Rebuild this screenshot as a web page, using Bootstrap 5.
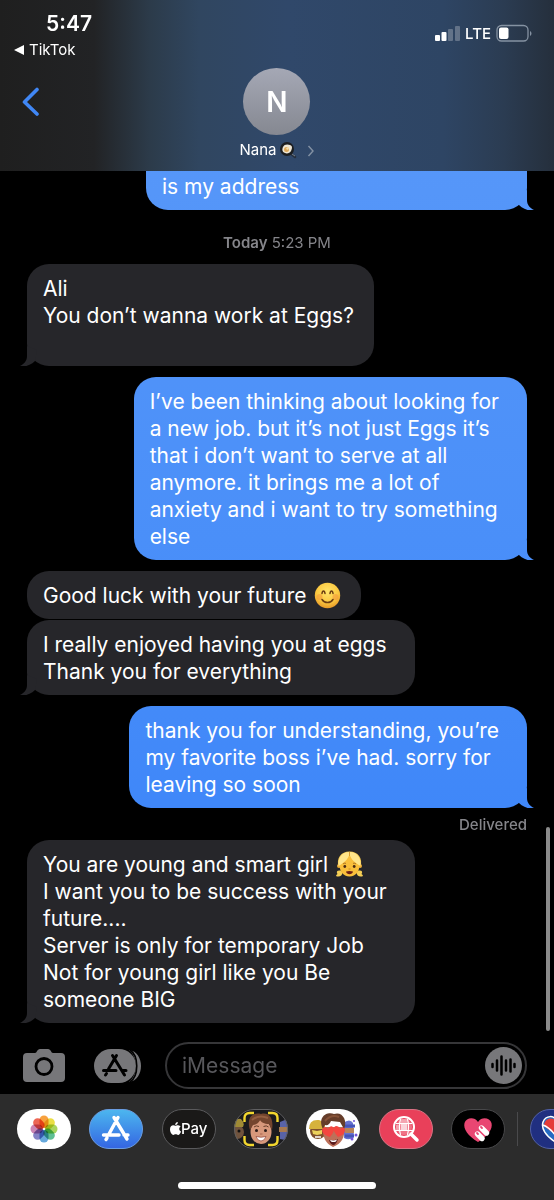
<!DOCTYPE html>
<html lang="en" data-bs-theme="dark">
<head>
<meta charset="utf-8">
<meta name="viewport" content="width=device-width, initial-scale=1">
<title>Messages – Nana</title>
<link href="https://cdn.jsdelivr.net/npm/bootstrap@5.3.0/dist/css/bootstrap.min.css" rel="stylesheet">
<style>
  body { background: #000; color: #fff; font-family: Inter, "Liberation Sans", sans-serif; overflow-x: hidden; }
  button { background: none; border: 0; padding: 0; color: inherit; flex-shrink: 0; }
  svg { display: block; }

  .chat-head { background: linear-gradient(90deg, #1f1f1f 0, #222325 17%, #2c3b4a 27%, #304660 36%, #30486a 52%, #2e4564 80%, #2b3c52 91%, #252f3c 100%); padding-bottom: 11px; }
  .status-bar { padding: 8px 22px 0 14px; height: 60px; }
  .clock { font-size: 21px; line-height: 32px; font-weight: 600; padding-left: 32px; }
  .back-app { font-size: 15px; line-height: 20px; color: #fff; gap: 5px; }
  .carrier { padding-top: 16px; gap: 5px; font-size: 15px; line-height: 20px; font-weight: 500; }
  .title-bar { padding: 8px 22px 0; }
  .title-side { width: 40px; }
  .avatar { width: 67px; height: 67px; border-radius: 50%; background: linear-gradient(#a5a8b5, #858891); font-size: 28px; font-weight: 600; }
  .contact { font-size: 15px; line-height: 20px; margin-top: 5px; gap: 2px; }

  .thread { padding: 0 27px 19px; }
  .bubble { position: relative; width: fit-content; font-size: 21px; line-height: 27px; padding: 11px 20px 10px 16px; border-radius: 22px; white-space: nowrap; background: #26262a; }
  .roomy { padding-right: 28px; }
  .sent { margin-left: auto; background: linear-gradient(#5a99fa 0, #5596f9 16%, #4a8ff9 45%, #3f87f9 68%, #3a84f9 100%) fixed; }
  .tail::after { content: ""; position: absolute; bottom: 0; width: 18px; height: 20px; background: inherit; clip-path: path("M0 4L10 0V10C10 15 13 18 17 20C11 21 6 19 2 15Z"); }
  .sent.tail::after { right: -8px; }
  .received.tail::after { left: -8px; transform: scaleX(-1); }
  .cut-top { width: 381px; max-width: 100%; border-radius: 0 0 22px 22px; padding-top: 2px; }
  .stamp { color: #85858a; font-size: 15px; line-height: 18px; margin: 24px 0 12px; }
  .delivered { color: #85858a; font-size: 15px; line-height: 18px; font-weight: 500; margin: 8px 0 6px; }
  .mb-turn { margin-bottom: 11px; }
  .mb-run { margin-bottom: 1px; }
  .emo { display: inline-block; width: 27px; height: 27px; margin-left: 2px; vertical-align: -6px; }
  .scroll-thumb { position: absolute; right: 4px; bottom: 63px; width: 4px; height: 204px; border-radius: 2px; background: #8b8b8b; }

  .compose { padding: 0 27px 5px 23px; }
  .compose-tools { gap: 29px; }
  .msg-box { border: 2px solid #363638; border-radius: 24px; height: 47px; min-width: 0; padding: 0 3px 0 15px; margin-left: 24px; }
  .msg-box input { background: transparent; border: 0; outline: 0; color: #fff; font-size: 21px; width: 100%; min-width: 0; padding: 0; }
  .msg-box input::placeholder { color: #57575b; opacity: 1; }

  .drawer { background: #2c2c2c; padding: 15px 0 11px; }
  .app-row { padding-left: 17px; overflow: hidden; }
  .app-rule { width: 1px; height: 34px; background: #4a4a4c; margin: 0 12px; }
  .peek { width: 24px; overflow: hidden; }
  .pay { width: 54px; height: 40px; border-radius: 20px; border: 1px solid #5a5a5c; background: #1a1918; font-size: 15px; font-weight: 500; }
  .petals rect { mix-blend-mode: multiply; }
  .home-bar { width: 198px; height: 7px; border-radius: 4px; background: #fff; margin: 33px auto 0; }
</style>
</head>
<body class="d-flex flex-column min-vh-100">

<header class="chat-head">
  <div class="status-bar d-flex justify-content-between">
    <div>
      <div class="clock">5:47</div>
      <a href="#" class="back-app d-flex align-items-center text-decoration-none">
        <svg width="10" height="10" viewBox="0 0 10 10"><path d="M10 0v10L0 5z" fill="#fff"/></svg><span>TikTok</span>
      </a>
    </div>
    <div class="carrier d-flex">
      <svg width="25" height="20" viewBox="0 0 25 20"><g fill="#fff"><rect y="11" width="5" height="6" rx="1"/><rect x="6.500" y="8" width="5" height="9" rx="1"/><g opacity=".25"><rect x="13" y="5" width="5" height="12" rx="1"/><rect x="20" y="2" width="5" height="15" rx="1"/></g></g></svg>
      <span>LTE</span>
      <svg width="36" height="20" viewBox="0 0 36 20"><rect x="1" y="1.500" width="31" height="15.500" rx="4.500" fill="none" stroke="#8592a2" stroke-width="1.300"/><path d="M34 7c2 1 2 4 0 5z" fill="#8592a2"/><rect x="3" y="3.500" width="9.500" height="11.500" rx="2" fill="#fff"/></svg>
    </div>
  </div>
  <div class="title-bar d-flex justify-content-between align-items-start">
    <button type="button" class="title-side" aria-label="Back"><svg width="20" height="67" viewBox="0 0 20 67"><path d="M15 21.500L2.500 34 15 46" fill="none" stroke="#4087f5" stroke-width="3.600" stroke-linecap="round" stroke-linejoin="round"/></svg></button>
    <button type="button" class="d-flex flex-column align-items-center">
      <span class="avatar d-flex align-items-center justify-content-center">N</span>
      <span class="contact d-flex align-items-center">Nana
        <svg width="18" height="18" viewBox="0 0 18 18" role="img" aria-label="egg in a pan"><path d="M11 12l5 4" stroke="#26313f" stroke-width="2.500" stroke-linecap="round"/><path d="M13 13l3 2" stroke="#777f8a"/><circle cx="8" cy="8" r="7" fill="#1c1e20"/><path d="M4 6c1-3 5-3 7-2 3 1 2 4 1 6s-4 3-6 2c-3-1-3-4-2-6z" fill="#eee6d4"/><circle cx="7.500" cy="8.500" r="2.500" fill="#dda85a"/><circle cx="8.500" cy="7.500" r="1.200" fill="#f7e0a8"/></svg>
        <svg width="8" height="14" viewBox="0 0 8 14" class="ms-2"><path d="M1.500 3L6 8l-4.500 5" fill="none" stroke="#8492a4" stroke-width="1.400"/></svg>
      </span>
    </button>
    <span class="title-side"></span>
  </div>
</header>

<main class="flex-grow-1 position-relative">
  <div class="thread">
    <div class="bubble sent tail cut-top">is my address</div>
    <div class="stamp text-center"><span class="fw-semibold">Today</span> 5:23 PM</div>
    <div class="bubble received tail mb-turn">Ali<br>You don’t wanna work at Eggs?<br>&nbsp;</div>
    <div class="bubble sent tail roomy mb-turn">I’ve been thinking about looking for<br>a new job. but it’s not just Eggs it’s<br>that i don’t want to serve at all<br>anymore. it brings me a lot of<br>anxiety and i want to try something<br>else</div>
    <div class="bubble received mb-run">Good luck with your future
      <svg class="emo" viewBox="0 0 27 27" role="img" aria-label="smiling face"><defs><radialGradient id="face" cx=".5" cy=".35" r=".65"><stop offset="0" stop-color="#ffe46a"/><stop offset=".65" stop-color="#fbc840"/><stop offset="1" stop-color="#e79a28"/></radialGradient></defs><circle cx="13.500" cy="13.500" r="12.700" fill="url(#face)"/><g fill="#f28b3c" opacity=".45"><circle cx="5.500" cy="15" r="3"/><circle cx="21.500" cy="15" r="3"/></g><g fill="none" stroke="#6b3d12" stroke-width="1.500" stroke-linecap="round"><path d="M8 11.500c.5-3.500 2.500-3.500 3 0M16 11.500c.5-3.500 2.500-3.500 3 0M8 17.500c2.500 4 8.500 4 11 0"/></g></svg></div>
    <div class="bubble received tail roomy mb-turn">I really enjoyed having you at eggs<br>Thank you for everything</div>
    <div class="bubble sent tail roomy">thank you for understanding, you’re<br>my favorite boss i’ve had. sorry for<br>leaving so soon</div>
    <div class="delivered text-end">Delivered</div>
    <div class="bubble received tail roomy">You are young and smart girl
      <svg class="emo" viewBox="0 0 27 27" role="img" aria-label="girl"><path d="M2.500 16C0 7 5 .5 13.500.5S27 7 24.500 16z" fill="#f3c84e"/><path d="M4.500 19.500C1 19 0 21 1.500 23c-1 .5-1 1-1.500 2 3 1.500 6.500 0 6.500-4zM22.500 19.500c3.500-.5 4.500 1.500 3 3.500 1 .5 1 1 1.500 2-3 1.500-6.500 0-6.500-4z" fill="#f6cf55"/><circle cx="3" cy="15" r="2" fill="#eeaf36"/><circle cx="24" cy="15" r="2" fill="#eeaf36"/><path d="M3.500 12h20c.5 8-3.500 13.500-10 13.500S3 20 3.500 12z" fill="#f9bf3b"/><path d="M5 12l8.500-8L22 12z" fill="#f9bf3b"/><path d="M2.500 15C1.500 7 6 1 13.500 1c.5 5-4 10-11 14zM24.500 15C25.500 7 21 1 13.500 1c-.5 5 4 10 11 14z" fill="#ffe58a"/><path d="M13.500 1v4" stroke="#d99c2e"/><path d="M7 13c1-1 2-1 3-.5M17 12.500c1-.5 2-.5 3 .5" fill="none" stroke="#a56b1e"/><circle cx="8.800" cy="15.500" r="1.400" fill="#4a2b13"/><circle cx="18.200" cy="15.500" r="1.400" fill="#4a2b13"/><path d="M12.500 18h2" stroke="#c98a20"/><path d="M10 20.500c2-.8 5-.8 7 0-.5 3.500-6.500 3.500-7 0z" fill="#6b1f16"/></svg><br>I want you to be success with your<br>future....<br>Server is only for temporary Job<br>Not for young girl like you Be<br>someone BIG</div>
  </div>

  <form class="compose d-flex align-items-center">
    <div class="compose-tools d-flex flex-shrink-0">
      <button type="button" aria-label="Camera"><svg width="42" height="34" viewBox="0 0 42 34"><path d="M4 4h8c2 0 2-4 5-4h8c3 0 3 4 5 4h8q4 0 4 4v21q0 4-4 4H4q-4 0-4-4V8q0-4 4-4z" fill="#77777a"/><circle cx="21" cy="17.500" r="8" fill="none" stroke="#000" stroke-width="2.800"/></svg></button>
      <button type="button" aria-label="Apps"><svg width="47" height="34" viewBox="0 0 47 34"><path d="M35 1c16 2 16 30 0 32 9-7 9-25 0-32z" fill="#77777a"/><rect width="42" height="34" rx="17" fill="#77777a"/><path d="M36 1c9 6 9 26 0 32" fill="none" stroke="#000" stroke-width="1.600"/><g stroke="#000" stroke-width="3" stroke-linecap="round"><path d="M18.500 6.500L30.500 26M22.500 6.500L14.500 20M9.500 21.500h12.500M28 21.500h4M12.500 24.500l-1 1.500"/></g></svg></button>
    </div>
    <div class="msg-box d-flex align-items-center flex-grow-1">
      <input type="text" placeholder="iMessage" aria-label="iMessage">
      <button type="button" aria-label="Record audio"><svg width="37" height="37" viewBox="0 0 37 37"><circle cx="18.500" cy="18.500" r="18.500" fill="#77777a"/><path d="M7.500 17v3M12 13.500v10M16.500 9.500v18M21 13.500v10M25.500 12.500v12M29.500 17v3" stroke="#000" stroke-width="2.500" stroke-linecap="round"/></svg></button>
    </div>
  </form>
  <div class="scroll-thumb"></div>
</main>

<footer class="drawer">
  <div class="app-row d-flex align-items-center">
    <div class="d-flex justify-content-between flex-grow-1">
      <button type="button" aria-label="Photos"><svg width="54" height="40" viewBox="0 0 54 40"><rect width="54" height="40" rx="20" fill="#fff"/><g class="petals"><rect x="22.500" y="6.500" width="9" height="12.500" rx="4.500" fill="#f7a13e"/><rect x="22.500" y="6.500" width="9" height="12.500" rx="4.500" fill="#eade45" transform="rotate(45 27 20)"/><rect x="22.500" y="6.500" width="9" height="12.500" rx="4.500" fill="#a9d45e" transform="rotate(90 27 20)"/><rect x="22.500" y="6.500" width="9" height="12.500" rx="4.500" fill="#5fbf94" transform="rotate(135 27 20)"/><rect x="22.500" y="6.500" width="9" height="12.500" rx="4.500" fill="#66a9dc" transform="rotate(180 27 20)"/><rect x="22.500" y="6.500" width="9" height="12.500" rx="4.500" fill="#8583c6" transform="rotate(225 27 20)"/><rect x="22.500" y="6.500" width="9" height="12.500" rx="4.500" fill="#cb86b5" transform="rotate(270 27 20)"/><rect x="22.500" y="6.500" width="9" height="12.500" rx="4.500" fill="#ec6655" transform="rotate(315 27 20)"/></g></svg></button>
      <button type="button" aria-label="App Store"><svg width="54" height="40" viewBox="0 0 54 40"><defs><linearGradient id="store" x2="0" y2="1"><stop stop-color="#4cb7ef"/><stop offset="1" stop-color="#3465e2"/></linearGradient></defs><rect x=".5" y=".5" width="53" height="39" rx="19.500" fill="url(#store)" stroke="#6a9ce0"/><path d="M25 8.500L38 30M29 8.500L20 25M14.500 26H30M35 26h4M18 29l-1 1.500" stroke="#fff" stroke-width="3.400" stroke-linecap="round"/></svg></button>
      <button type="button" class="pay d-flex align-items-center justify-content-center" aria-label="Apple Pay"><svg width="11" height="14" viewBox="0 0 11 14"><path d="M7.800 0c.1 1.700-1 3-2.600 3C5 1.500 6.300.2 7.800 0zM5.500 3.800c.6 0 1.300-.7 2.700-.6 1 .1 1.900.5 2.400 1.300-2 1.300-1.700 4 .4 4.900-.5 1.400-1.600 3.500-2.900 3.500-.9 0-1.300-.6-2.400-.6s-1.500.6-2.400.6C1.600 12.900 0 10 0 7.300c0-2.600 1.600-4 3.200-4 1 0 1.700.5 2.300.5z" fill="#fff"/></svg><span>Pay</span></button>
      <button type="button" aria-label="Memoji"><svg width="54" height="40" viewBox="0 0 54 40"><defs><clipPath id="pill"><rect width="54" height="40" rx="20"/></clipPath></defs><g clip-path="url(#pill)"><path fill="#1b1b1e" d="M0 0h54v40H0z"/><circle cx="3" cy="23" r="7" fill="#70533d"/><path d="M-2 18q3-10 9-8 4 4 2 8z" fill="#a08b35"/><circle cx="5" cy="22" r="1.500" fill="#111"/><path d="M46 13l10-4v23l-10-2z" fill="#5963a8"/><path d="M45 18h10v5H45z" fill="#a97a50"/></g><rect x=".5" y=".5" width="53" height="39" rx="19.500" fill="none" stroke="#606062"/><path d="M10.500 13V9q0-5 5-5H20M34 4h4.500q5 0 5 5v4M43.500 27v4q0 5-5 5H34M20 36h-4.500q-5 0-5-5v-4" fill="none" stroke="#f2d62f" stroke-width="2.400"/><ellipse cx="27" cy="23" rx="10.500" ry="12" fill="#d7987b"/><path d="M16 21C12 8 19 3 27 5c8-2 13 4 11 16l-3-6c-5 0-8-2-9-4-1 3-4 5-7 5z" fill="#74452e"/><path d="M18 11q7-6 16-2" fill="none" stroke="#945f41" stroke-width="2"/><g fill="#2a1a17"><circle cx="22.500" cy="21.500" r="1.500"/><circle cx="31.500" cy="21.500" r="1.500"/></g><path d="M20 18q2-2 5-.5M29.500 17.500q3-1.500 5 .5" stroke="#653d29" fill="none"/><path d="M22 27.500q5 1.500 10 0-1.500 4.500-5 4.500t-5-4.500z" fill="#fff" stroke="#8d4136" stroke-width=".7"/><path d="M26 25h2.500" stroke="#aa654e"/></svg></button>
      <button type="button" aria-label="Memoji stickers"><svg width="54" height="40" viewBox="0 0 54 40"><rect width="54" height="40" rx="20" fill="#fff"/><circle cx="12" cy="22" r="8" fill="#80502d"/><path d="M3 20q0-10 10-9 7 2 6 9z" fill="#d6b23c"/><path d="M6 21l5 1 5-1v4l-5 1-4-1z" fill="#ecd25b"/><path d="M9 28h6" stroke="#fff" stroke-width="1.500"/><path d="M37 14q7-5 10 0l1 14q-5 4-10 1z" fill="#6672d0"/><path d="M39 19h9v5h-9z" fill="#b88358"/><path d="M38 17h11M39 27h9" stroke="#4654b8" stroke-width="3"/><g fill="#7454d9"><circle cx="50" cy="26" r="1.500"/><circle cx="48" cy="12" r="1"/><circle cx="46" cy="30" r="1.500"/></g><path d="M17 18h21q2 15-11 20-11-5-10-20z" fill="#bd7059"/><path d="M17 20C11 8 21 2 28 5c8-3 14 6 10 15l-4-7-9-1q-2 5-6 4z" fill="#653d2a"/><path d="M19 12q6-7 14-4" fill="none" stroke="#855238" stroke-width="2"/><g fill="#f4463f"><path d="M24 28c-8-2-9-7-7-9q3-2 5 1 2-4 5-2 3 3-3 10z"/><path d="M32 28c-6-7-5-10-2-11q3 0 4 3 3-3 5 0 1 5-7 8z"/></g><path d="M23 31q4 1 9-1-2 6-5 6-3-1-4-5z" fill="#5c1c1e"/><path d="M24 31q4 1 7-.5l-1 2q-3 1-5 0z" fill="#fff"/></svg></button>
      <button type="button" aria-label="Image search"><svg width="54" height="40" viewBox="0 0 54 40"><rect x=".5" y=".5" width="53" height="39" rx="19.500" fill="#e9405a" stroke="#d97384"/><circle cx="25" cy="18" r="8" fill="#ef7386"/><path d="M22 15h6v6h-6z" fill="#fff" opacity=".7"/><path d="M17 16h4v5h-4zM22 10h6v4h-6z" fill="#fff" opacity=".35"/><g fill="none" stroke="#fff"><circle cx="25" cy="18" r="10" stroke-width="2"/><path d="M17 14.500h16M16 21.500h18M21.500 10q-2 8 0 16M28.500 10q2 8 0 16" stroke-width="1.200"/><path d="M32 25l6 6" stroke-width="3.500" stroke-linecap="round"/></g></svg></button>
      <button type="button" aria-label="Digital Touch"><svg width="54" height="40" viewBox="0 0 54 40"><rect x=".5" y=".5" width="53" height="39" rx="19.500" fill="#000" stroke="#48484a"/><path d="M27 33C17 27 12 20 13.500 14 15 9 23 7 27 13c4-6 12-4 13.500 1C42 20 37 27 27 33z" fill="#e94672"/><path d="M26.500 25l4.500 4.500M30.500 19l5 5" stroke="#fff" stroke-width="5.400" stroke-linecap="round"/><path d="M26 24l1 1M30 18l1 1" stroke="#e94672" stroke-width="1.800" stroke-linecap="round"/></svg></button>
    </div>
    <div class="app-rule flex-shrink-0"></div>
    <button type="button" class="peek" aria-label="Sports"><svg width="54" height="40" viewBox="0 0 54 40"><rect x=".5" y=".5" width="53" height="39" rx="19.500" fill="#202f80" stroke="#5261a5"/><path d="M27 34C15 27 11 19 13 13 16 6 24 6 27 12c3-6 11-6 14 1 2 6-2 14-14 21z" fill="#256bc3" stroke="#fff" stroke-width="1.500"/><path d="M14 17c0-8 9-10 13-4v14z" fill="#e43c39"/><path d="M13 16q8 3 14 13" fill="none" stroke="#fff" stroke-width="1.500"/></svg></button>
  </div>
  <div class="home-bar"></div>
</footer>

<script src="https://cdn.jsdelivr.net/npm/bootstrap@5.3.0/dist/js/bootstrap.bundle.min.js"></script>
</body>
</html>
